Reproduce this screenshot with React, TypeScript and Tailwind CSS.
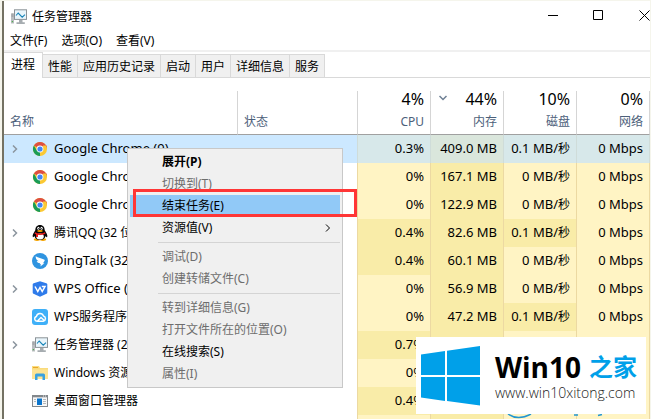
import type { ReactNode } from "react";
import clsx from "clsx";

const MonitorIcon = () => (
  <svg className="h-4 w-4 shrink-0" viewBox="0 0 16 16">
    <rect x="0" y="4.5" width="3" height="10" fill="#b9bdc0" />
    <path d="M0.5 5h2M0.5 7h2" stroke="#777" strokeWidth="0.6" />
    <rect x="0.8" y="12" width="1.2" height="1.2" fill="#4fb04f" />
    <rect x="3.5" y="0.8" width="12" height="9.6" fill="#e9f5fb" stroke="#8b9297" />
    <path d="M5 6.5L7.2 4l4 4.2L14 5.6" fill="none" stroke="#1884b8" strokeWidth="1.1" />
    <path d="M8 11h3.5v2.2h2.3v1.8H5.5v-1.8H8z" fill="#a6acb0" />
  </svg>
);

const ChromeIcon = () => (
  <svg className="h-4 w-4 shrink-0" viewBox="0 0 16 16">
    <circle cx="8" cy="8" r="7" fill="#fbc934" />
    <path d="M8 8L1.9 4.5A7 7 0 0 1 14.1 4.6z" fill="#dd4f42" />
    <path d="M8 8H14.9V4.6H8z" fill="#dd4f42" />
    <path d="M14.1 4.6A7 7 0 0 1 15 8L8 15l3-6V4.6z" fill="#fbc934" />
    <path d="M1.9 4.5L5 9.7l3.2.8L8 15A7 7 0 0 1 1.9 4.5z" fill="#1a9c57" />
    <path d="M8 15l3-5.5-3 1z" fill="#fbc934" />
    <circle cx="8" cy="8" r="3.4" fill="#fff" />
    <circle cx="8" cy="8" r="2.6" fill="#4286f5" />
  </svg>
);

const QQIcon = () => (
  <svg className="h-4 w-4 shrink-0" viewBox="0 0 16 16">
    <ellipse cx="5" cy="14.6" rx="3.2" ry="1.3" fill="#f5a400" />
    <ellipse cx="11" cy="14.6" rx="3.2" ry="1.3" fill="#f5a400" />
    <path d="M8 0C4.8 0 3.3 2.3 3.3 5.2C2 7.3 0 10 0.8 12C1.2 12.6 2 11.8 2.5 11C3 13.6 5 15 8 15s5-1.4 5.5-4c.5.8 1.3 1.6 1.7 1C16 10 14 7.3 12.7 5.2C12.7 2.3 11.2 0 8 0z" fill="#080808" />
    <ellipse cx="8" cy="11.4" rx="3.8" ry="3" fill="#fff" />
    <ellipse cx="6.4" cy="3.3" rx="1.1" ry="1.5" fill="#fff" />
    <ellipse cx="9.6" cy="3.3" rx="1.1" ry="1.5" fill="#fff" />
    <circle cx="6.7" cy="3.4" r="0.5" />
    <circle cx="9.3" cy="3.4" r="0.5" />
    <ellipse cx="8" cy="6" rx="2.8" ry="1" fill="#f5a400" />
    <path d="M3 7.2Q8 10 13 7.2L13.4 8.8Q8 11.4 2.6 8.8z" fill="#e61c1c" />
    <path d="M4 9h2v3H4z" fill="#e61c1c" />
  </svg>
);

const DingTalkIcon = () => (
  <svg className="h-4 w-4 shrink-0" viewBox="0 0 16 16">
    <circle cx="8" cy="8" r="8" fill="#2f94e0" />
    <path d="M3.6 3.2c2.6 1.5 6 2.1 8.4 3.2.9.4.8 1 .5 1.7L11 10.2h1.5L8.3 13.6l.8-2.4H7.7l.5-1C5.8 9.8 5 9 4.7 7.9l2 .3C4.5 7.2 3.7 5.5 3.6 3.2z" fill="#fff" />
  </svg>
);

const WpsOfficeIcon = () => (
  <svg className="h-4 w-4 shrink-0" viewBox="0 0 16 16">
    <path d="M8 0.2L14.3 2.2Q15.3 2.6 15.3 3.6V11.4Q15.3 12.3 14.5 12.7L8 15.8L1.5 12.7Q.7 12.3.7 11.4V3.6Q.7 2.6 1.7 2.2z" fill="#2f7bea" />
    <path d="M3 5.5L5.8 10.5L8 6.5L10.2 10.5L13 5.5H9.8" fill="none" stroke="#fff" strokeWidth="1.5" />
  </svg>
);

const WpsCloudIcon = () => (
  <svg className="h-4 w-4 shrink-0" viewBox="0 0 16 16">
    <rect width="16" height="16" rx="3" fill="#3fb0f8" />
    <path d="M5 12.2a2.4 2.4 0 0 1-.6-4.7A3.7 3.7 0 0 1 11.5 7a2.7 2.7 0 0 1 0 5.2zM5.5 12L9 8.5l3.3 3" fill="none" stroke="#fff" strokeWidth="1.4" strokeLinejoin="round" />
  </svg>
);

const FolderIcon = () => (
  <svg className="h-4 w-4 shrink-0" viewBox="0 0 16 16">
    <path d="M0 1h7l1 2h8v11H0z" fill="#fadb7c" />
    <path d="M1 2h5v1H1z" fill="#e8a72c" />
    <path d="M0 4.5h16V14H0z" fill="#fde494" />
    <path d="M3 15V10q0-1.5 1.5-1.5h7Q13 8.5 13 10v5h-2.5v-3.5h-5V15z" fill="#3aa2e0" />
  </svg>
);

const WindowManagerIcon = () => (
  <svg className="h-4 w-4 shrink-0" viewBox="0 0 16 16">
    <rect x="0.5" y="2.5" width="15" height="11" fill="#f7f7f7" stroke="#83888c" />
    <path d="M0 2h16v2.3H0z" fill="#83888c" />
    <path d="M11 3h1M13 3h1" stroke="#fff" strokeWidth="0.8" />
    <rect x="5" y="5.5" width="5" height="6.5" fill="#0a74cc" />
    <path d="M11 6.5h3M11 8.5h3M11 10.5h3M2 6.5h2M2 8.5h2" stroke="#b5b8ba" />
  </svg>
);

const ChevronRight = ({ className }: { className?: string }) => (
  <svg className={clsx("h-2 w-2", className)} viewBox="0 0 8 8" fill="none" stroke="currentColor">
    <path d="M2 0.5L5.5 4L2 7.5" />
  </svg>
);

const tabs = ["进程", "性能", "应用历史记录", "启动", "用户", "详细信息", "服务"];

const metrics = [
  { total: "4%", label: "CPU" },
  { total: "44%", label: "内存", sorted: true },
  { total: "10%", label: "磁盘" },
  { total: "0%", label: "网络" },
];

type Process = {
  icon: () => ReactNode;
  name: string;
  compact?: boolean;
  expandable?: boolean;
  selected?: boolean;
  cpu: string;
  memory: string;
  disk: string;
};

const processes: Process[] = [
  { icon: ChromeIcon, name: "Google Chrome (9)", expandable: true, selected: true, cpu: "0.3%", memory: "409.0 MB", disk: "0.1 MB/秒" },
  { icon: ChromeIcon, name: "Google Chrome", cpu: "0%", memory: "167.1 MB", disk: "0 MB/秒" },
  { icon: ChromeIcon, name: "Google Chrome", cpu: "0%", memory: "122.9 MB", disk: "0 MB/秒" },
  { icon: QQIcon, name: "腾讯QQ (32 位)", compact: true, expandable: true, cpu: "0.4%", memory: "82.6 MB", disk: "0.1 MB/秒" },
  { icon: DingTalkIcon, name: "DingTalk (32 位)", cpu: "0.4%", memory: "60.1 MB", disk: "0 MB/秒" },
  { icon: WpsOfficeIcon, name: "WPS Office (32 位)", expandable: true, cpu: "0%", memory: "56.9 MB", disk: "0 MB/秒" },
  { icon: WpsCloudIcon, name: "WPS服务程序", compact: true, cpu: "0%", memory: "47.2 MB", disk: "0.1 MB/秒" },
  { icon: MonitorIcon, name: "任务管理器 (2)", compact: true, expandable: true, cpu: "0.7%", memory: "", disk: "" },
  { icon: FolderIcon, name: "Windows 资源管理器", compact: true, cpu: "0%", memory: "", disk: "" },
  { icon: WindowManagerIcon, name: "桌面窗口管理器", compact: true, cpu: "0.4%", memory: "", disk: "" },
];

const menuGroups = [
  [
    { label: "展开(P)", bold: true },
    { label: "切换到(T)", disabled: true },
    { label: "结束任务(E)", active: true },
    { label: "资源值(V)", submenu: true },
  ],
  [
    { label: "调试(D)", disabled: true },
    { label: "创建转储文件(C)", disabled: true },
  ],
  [
    { label: "转到详细信息(G)", disabled: true },
    { label: "打开文件所在的位置(O)", disabled: true },
    { label: "在线搜索(S)" },
    { label: "属性(I)", disabled: true },
  ],
] as { label: string; bold?: boolean; disabled?: boolean; active?: boolean; submenu?: boolean }[][];

function Metric({ value, selected, warm, last }: { value: string; selected?: boolean; warm?: boolean; last?: boolean }) {
  const [amount, unit] = value.split("秒");

  return (
    <td
      className={clsx(
        "border-l pr-[6px] text-right text-[13px] whitespace-nowrap",
        last && "border-r",
        selected ? "border-[#cfdcd9]" : "border-[#ecd9a2]",
        selected ? (warm ? "bg-[#dae6dc]" : "bg-[#d7e8ea]") : warm ? "bg-[#f9eca8]" : "bg-[#fff4c4]"
      )}
    >
      {amount}
      {unit !== undefined && <span className="text-xs">秒</span>}
    </td>
  );
}

function ContextMenu() {
  return (
    <div role="menu" className="absolute top-[148px] left-[127px] w-[216px] border border-[#c8c8c8] bg-[#f0f0f0] p-[2px]">
      {menuGroups.map((group, index) => (
        <div key={index}>
          {index > 0 && <div className="my-[3px] ml-7 h-px bg-[#d4d4d4]"></div>}
          {group.map((item) => (
            <button
              key={item.label}
              role="menuitem"
              disabled={item.disabled}
              className={clsx(
                "flex h-[22px] w-full items-center justify-between pr-2 pl-8 text-left",
                item.bold && "font-bold",
                item.active && "bg-[#91c9f7]",
                item.disabled && "text-[#6d6d6d]"
              )}
            >
              {item.label}
              {item.submenu && <ChevronRight />}
            </button>
          ))}
        </div>
      ))}
      {/* Highlight frame around the end task entry */}
      <div className="pointer-events-none absolute top-10 left-[5px] h-7 w-56 border-3 border-[#ff3636]"></div>
    </div>
  );
}

function Watermark() {
  return (
    <div className="absolute right-[5px] bottom-[5px] flex h-[77px] w-[230px] items-center gap-[14px] bg-white pl-[5px]">
      <svg className="h-[60px] w-[60px] shrink-0" viewBox="0 0 60 60" fill="#00a0e9">
        <path d="M0 8.5L24 5V29H0zM26 4.7L59 0V29H26zM0 31H24V55L0 51.5zM26 31H59V59.5L26 55z" />
      </svg>
      <div className="pb-[2px] whitespace-nowrap">
        <div className="flex items-center gap-2 font-bold">
          <span className="font-['Open_Sans'] text-[28px] leading-9">Win10</span>
          <span className="text-[24px] leading-9 text-[#00a0e9]">之家</span>
        </div>
        <div className="font-['Open_Sans'] text-sm leading-4 font-light text-[#222]">www.win10xitong.com</div>
      </div>
      <svg className="absolute top-[77px] left-[88px] h-[5px] w-[150px]" viewBox="0 0 150 5" fill="none" stroke="#2497cf" strokeWidth="1.5">
        <path d="M4 0Q14 7 27 0M70 1h4M94 1.5l4-1" />
      </svg>
    </div>
  );
}

export default function App() {
  return (
    <div className="relative h-screen overflow-hidden bg-[#f5f5ec] pt-px pr-px pl-[2px] font-['Noto_Sans','Noto_Sans_CJK_SC',sans-serif] text-xs text-black">
      <div className="flex h-full flex-col border-l-2 border-[#747263] bg-white">
        <header className="flex h-[31px] shrink-0 items-start justify-between pl-[7px]">
          <div className="flex h-8 items-center gap-[5px]">
            <MonitorIcon />
            <h1>任务管理器</h1>
          </div>
          <div className="flex h-7">
            <button aria-label="最小化" className="flex w-[45px] items-center justify-center">
              <svg className="h-[11px] w-[11px]" viewBox="0 0 11 11" stroke="#000"><path d="M0 5.5h10" /></svg>
            </button>
            <button aria-label="最大化" className="flex w-[45px] items-center justify-center">
              <svg className="h-[11px] w-[11px]" viewBox="0 0 11 11" fill="none" stroke="#000"><path d="M.5.5h9v9h-9z" /></svg>
            </button>
            <button aria-label="关闭" className="flex w-[29px] items-center justify-end">
              <svg className="h-[11px] w-[11px]" viewBox="0 0 11 11" stroke="#000"><path d="M.5.5l10 10M10.5.5l-10 10" /></svg>
            </button>
          </div>
        </header>

        <nav className="flex h-5 shrink-0 items-center gap-[14px] border-b-2 border-[#f0f0f0] pl-[6px]">
          <button>文件(F)</button>
          <button>选项(O)</button>
          <button>查看(V)</button>
        </nav>

        <div role="tablist" className="flex h-[26px] shrink-0 items-end border-b border-[#d9d9d9]">
          {tabs.map((tab, index) => (
            <button
              key={tab}
              role="tab"
              aria-selected={index === 0}
              className={clsx(
                "border-t border-r border-[#d9d9d9]",
                index === 0 ? "-mb-px h-[26px] bg-white px-[7px] pb-px" : "h-[23px] bg-[#f0f0f0] px-[5px] pt-px"
              )}
            >
              {tab}
            </button>
          ))}
        </div>

        <table className="mt-[13px] w-full table-fixed border-separate border-spacing-0">
          <colgroup>
            <col className="w-[233px]" />
            <col />
            <col className="w-[73px]" />
            <col className="w-[73px]" />
            <col className="w-[73px]" />
            <col className="w-[74px]" />
          </colgroup>
          <thead className="text-[#4c607a]">
            <tr className="h-11">
              <th className="border-b border-[#a0a0a0] p-0 pb-1 pl-[6px] text-left align-bottom leading-4 font-normal">名称</th>
              <th className="border-b border-l border-b-[#a0a0a0] border-l-[#d5d5d5] p-0 pb-1 pl-[6px] text-left align-bottom leading-4 font-normal">状态</th>
              {metrics.map((metric) => (
                <th
                  key={metric.label}
                  className="border-b border-l border-b-[#a0a0a0] border-l-[#d5d5d5] p-0 pr-[6px] pb-1 text-right align-bottom font-normal last:border-r last:border-r-[#d5d5d5]"
                >
                  <div className="flex h-[23px] items-start justify-end text-base leading-4 text-black">
                    {metric.sorted && <ChevronRight className="mt-[3px] mr-auto ml-2 rotate-90 stroke-[1.5] text-[#6d7f93]" />}
                    {metric.total}
                  </div>
                  <div className="leading-4">{metric.label}</div>
                </th>
              ))}
            </tr>
          </thead>
          <tbody>
            {processes.map((process, index) => (
              <tr key={index} className="h-7">
                <td className={clsx("p-0 pl-[3px]", process.selected && "bg-[#cce8ff]")}>
                  <div className="flex items-center whitespace-nowrap">
                    <span className="mr-[9px] flex w-4 justify-center">
                      {process.expandable && (
                        <button aria-label="展开" className="text-[#8b959e]">
                          <ChevronRight className="stroke-[1.5]" />
                        </button>
                      )}
                    </span>
                    <process.icon />
                    <span className={clsx("ml-[6px]", process.compact ? "text-xs" : "text-[13px]")}>{process.name}</span>
                  </div>
                </td>
                <td className={clsx(process.selected && "bg-[#cce8ff]")}></td>
                <Metric value={process.cpu} selected={process.selected} warm={!process.selected && process.cpu !== "0%"} />
                <Metric value={process.memory} selected={process.selected} warm />
                <Metric value={process.disk} selected={process.selected} warm={!process.selected && process.disk.startsWith("0.1")} />
                <Metric value={index < 7 ? "0 Mbps" : ""} selected={process.selected} last />
              </tr>
            ))}
            <tr className="h-7">
              <td></td>
              <td></td>
              <Metric value="" />
              <Metric value="" warm />
              <Metric value="" />
              <Metric value="" last />
            </tr>
          </tbody>
        </table>
      </div>

      <ContextMenu />
      <Watermark />
    </div>
  );
}
